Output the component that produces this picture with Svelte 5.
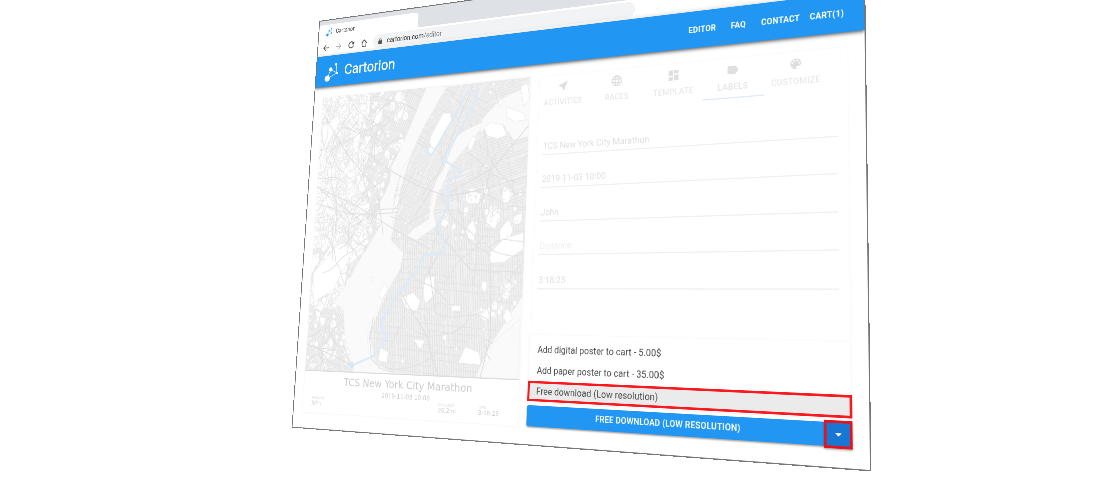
<script>
  const links = ['Editor', 'FAQ', 'Contact', 'Cart(1)'];
  const tabs = [
    { name: 'Activities', d: 'M21 3 3 10.5v1l6.800 2.700L12.500 21h1z' },
    { name: 'Races', d: 'M12 2a10 10 0 1 0 0 20 10 10 0 0 0 0-20zm6.900 6h-2.950a15.600 15.600 0 0 0-1.380-3.560A8 8 0 0 1 18.920 8zM12 4.040c.83 1.200 1.480 2.530 1.910 3.960h-3.820c.43-1.430 1.080-2.760 1.910-3.960zM4.260 14a8.200 8.200 0 0 1 0-4h3.380a16.500 16.500 0 0 0 0 4zm.82 2h2.950c.32 1.250.78 2.450 1.380 3.560A8 8 0 0 1 5.080 16zm2.950-8H5.080a8 8 0 0 1 4.330-3.560A15.600 15.600 0 0 0 8.030 8zM12 19.960A14 14 0 0 1 10.090 16h3.820A14 14 0 0 1 12 19.960zM14.340 14H9.660a14.700 14.700 0 0 1 0-4h4.680a14.700 14.700 0 0 1 0 4zm.25 5.560c.6-1.110 1.060-2.310 1.380-3.560h2.950a8 8 0 0 1-4.330 3.560zM16.360 14a16.500 16.500 0 0 0 0-4h3.380a8.200 8.200 0 0 1 0 4z' },
    { name: 'Template', d: 'M3 13h8V3H3zm0 8h8v-6H3zm10 0h8V11h-8zm0-18v6h8V3z' },
    { name: 'Labels', d: 'M17.630 5.840A2 2 0 0 0 16 5L5 5.010A2 2 0 0 0 3 7v10a2 2 0 0 0 2 1.990L16 19a2 2 0 0 0 1.630-.84L22 12z' },
    { name: 'Customize', d: 'M12 3a9 9 0 0 0 0 18c.83 0 1.500-.67 1.500-1.500 0-.39-.15-.74-.39-1.010a1.500 1.500 0 0 1 1.120-2.490H16a5 5 0 0 0 5-5c0-4.420-4.030-8-9-8zm-5.500 9a1.500 1.500 0 1 1 0-3 1.500 1.500 0 0 1 0 3zm3-4a1.500 1.500 0 1 1 0-3 1.500 1.500 0 0 1 0 3zm5 0a1.500 1.500 0 1 1 0-3 1.500 1.500 0 0 1 0 3zm3 4a1.500 1.500 0 1 1 0-3 1.500 1.500 0 0 1 0 3z' }
  ];
  const fields = [
    { text: 'TCS New York City Marathon' },
    { text: '2019-11-03 10:00' },
    { text: 'John' },
    { text: 'Distance', empty: true },
    { text: '3:18:23' }
  ];
  const options = [
    'Add digital poster to cart - 5.00$',
    'Add paper poster to cart - 35.00$',
    'Free download (Low resolution)'
  ];

  // Deterministic random numbers for the street texture
  let seed = 41;
  function rnd() {
    seed = (seed * 16807) % 2147483647;
    return seed / 2147483647;
  }

  // Parallel broken streets inside a box, turned by an angle
  function streets(x, y, w, h, deg, gap, keep) {
    const t = (deg * Math.PI) / 180;
    const c = Math.cos(t), s = Math.sin(t);
    const R = Math.hypot(w, h) / 2, cx = x + w / 2, cy = y + h / 2;
    let d = '';
    for (let v = -R; v < R; v += gap) {
      for (let u = -R; u < R; ) {
        const len = 12 + rnd() * 60;
        if (rnd() < keep) {
          const x1 = cx + u * c - v * s, y1 = cy + u * s + v * c;
          d += `M${x1.toFixed(1)} ${y1.toFixed(1)}l${(len * c).toFixed(1)} ${(len * s).toFixed(1)}`;
        }
        u += len + 3;
      }
    }
    return d;
  }

  // Irregular blocks: open ground among the streets
  function blobs(n, x, y, w, h, size) {
    let d = '';
    for (let i = 0; i < n; i++) {
      const cx = x + rnd() * w, cy = y + rnd() * h, r = size * (0.25 + rnd() * rnd() * 1.6);
      const k = 5 + Math.floor(rnd() * 3), o = rnd() * 6;
      for (let j = 0; j < k; j++) {
        const a = o + (j * 6.283) / k, q = r * (0.5 + rnd() * 0.7);
        d += (j ? 'L' : 'M') + (cx + q * Math.cos(a)).toFixed(1) + ' ' + (cy + q * Math.sin(a) * 1.3).toFixed(1);
      }
      d += 'z';
    }
    return d;
  }

  // Winding main roads
  function roads(n, x, y, w, h) {
    let d = '';
    for (let i = 0; i < n; i++) {
      let px = x + rnd() * w, py = y + rnd() * h, a = rnd() * 6.283;
      d += `M${px.toFixed(1)} ${py.toFixed(1)}`;
      for (let j = 0; j < 7; j++) {
        a += (rnd() - 0.5) * 0.9;
        px += Math.cos(a) * 18;
        py += Math.sin(a) * 18;
        d += `L${px.toFixed(1)} ${py.toFixed(1)}`;
      }
    }
    return d;
  }

  const west = '22,164 273,164 225,324 208,414 181,440 120,530 80,560 22,600';
  const manhattan = '319,166 436,164 411,238 346,266 320,329 299,353 292,423 259,441 231,479 201,516 212,440 225,360 243,298 273,238';
  const queens = '436,164 500,164 500,430 400,430 345,400 311,436 303,411 308,379 322,354 335,323 400,253';
  const brooklyn = '311,436 345,390 500,400 500,568 438,657 410,714 265,714 196,715 170,640 213,549 234,517 239,486 207,460 229,441 259,441';
  const staten = '24,595 97,588 111,607 110,652 138,714 22,714';
  const areas = [
    { id: 'west', pts: west, deg: [118, 25], box: [22, 164, 260, 440] },
    { id: 'manh', pts: manhattan, deg: [118, 28], box: [200, 164, 240, 350] },
    { id: 'queens', pts: queens, deg: [-14, 76], box: [300, 164, 200, 280] },
    { id: 'brook', pts: brooklyn, deg: [85, 4], box: [165, 380, 340, 340] },
    { id: 'staten', pts: staten, deg: [60, -25], box: [22, 585, 120, 130] }
  ].map((a) => ({
    ...a,
    lines: streets(...a.box, a.deg[0], 5, 0.9) + streets(...a.box, a.deg[1], 13, 0.5)
  }));
  const open =
    blobs(240, 22, 170, 110, 300, 21) + blobs(60, 120, 164, 110, 130, 9) + blobs(110, 90, 290, 120, 240, 6) +
    blobs(60, 22, 480, 80, 110, 11) + blobs(70, 24, 600, 100, 110, 6) + blobs(34, 330, 370, 160, 90, 11) +
    blobs(50, 220, 410, 270, 290, 3) + blobs(26, 410, 530, 85, 130, 8) + blobs(50, 230, 170, 220, 240, 3);
  const mainRoads = roads(40, 22, 164, 200, 400) + roads(18, 300, 270, 190, 160) + roads(14, 230, 430, 250, 260) + roads(8, 24, 600, 80, 90);
  const grounds = [
    '329,219 314,218 288,262 284,294 296,298 316,257 333,233',
    '241,571 267,562 283,577 276,596 250,590',
    '291,534 313,531 312,568 294,583 289,562',
    '430,488 456,464 497,453 498,483 458,507 430,507',
    '353,586 371,586 371,595 353,595',
    '272,649 298,651 288,667',
    '198,666 217,675 215,694 196,691',
    '27,224 60,205 68,218 40,262 26,314',
    '26,523 88,464 121,478 79,556 31,582'
  ];
</script>

<div class="window">
  <div class="strip">
    <div class="tab">
      <svg class="fav" viewBox="0 0 32 34"><g fill="#2196f3" stroke="#2196f3" stroke-width="1"><path fill="none" d="M6 28 14 12 26 22 25 4M6 28 26 22" /><circle cx="6" cy="28" r="5" /><circle cx="14" cy="12" r="3" /><circle cx="26" cy="22" r="2" /><circle cx="25" cy="4" r="2" /></g></svg>
      <span>Cartorion</span>
    </div>
  </div>
  <div class="toolbar">
    <svg viewBox="0 0 24 24"><path d="M21 11H6.800l6-6L11.400 3.600 3 12l8.400 8.400 1.400-1.400-6-6H21z" /></svg>
    <svg viewBox="0 0 24 24" class="off"><path d="M3 11h14.200l-6-6 1.400-1.400L21 12l-8.400 8.400-1.400-1.400 6-6H3z" /></svg>
    <svg viewBox="0 0 24 24"><path d="M18.400 5.600A9 9 0 1 0 20.700 14.500h-2.500A6.600 6.600 0 1 1 16.600 7.300L13 11h8V3z" /></svg>
    <svg viewBox="0 0 24 24"><path fill-rule="evenodd" d="M12 2 2 11.500h3V21h14v-9.500h3zM12 5l5 4.800V19H7V9.800z" /></svg>
    <div class="omni">
      <svg viewBox="0 0 24 24"><path fill-rule="evenodd" d="M18 9h-1V7A5 5 0 0 0 7 7v2H6a2 2 0 0 0-2 2v9a2 2 0 0 0 2 2h12a2 2 0 0 0 2-2v-9a2 2 0 0 0-2-2zM9 7a3 3 0 0 1 6 0v2H9z" /></svg>
      <span>cartorion.com<i>/editor</i></span>
    </div>
  </div>
  <header>
    <svg class="logo" viewBox="0 0 34 38"><g fill="#fff"><path fill="none" stroke="#fff" stroke-width="1.200" d="M7 31 14 14 29 22 26 5M7 31 29 22" /><circle cx="7" cy="31" r="6" /><circle cx="14" cy="14" r="4" /><circle cx="29" cy="22" r="2.300" /><circle cx="26" cy="5" r="2.600" /></g></svg>
    <h1>Cartorion</h1>
    <nav>{#each links as l}<a href="#top">{l}</a>{/each}</nav>
  </header>
  <main>
    <section class="poster">
      <svg class="map" viewBox="22 164 478 550" preserveAspectRatio="none">
        <defs>{#each areas as a}<clipPath id={a.id}><polygon points={a.pts} /></clipPath>{/each}</defs>
        <rect x="22" y="164" width="478" height="550" fill="#fafafa" />
        {#each areas as a}
          <polygon points={a.pts} fill="#f0f0f0" />
          <path d={a.lines} clip-path="url(#{a.id})" stroke="#e6e6e6" stroke-width="2.200" fill="none" />
        {/each}
        <path d={open} fill="#fff" stroke="#ebebeb" stroke-width="1.200" />
        {#each grounds as g}<polygon points={g} fill="#fff" stroke="#eaeaea" />{/each}
        <g stroke="#e2e2e2" stroke-width="1.700" fill="none">
          <path d={mainRoads} />
        </g>
        <g fill="#fafafa" stroke="#efefef" stroke-width="1">
          <path d="M273 164 319 166 273 238 243 298 225 324 212 369 208 414 213 440 207 460 239 486 234 517 213 549 185 600 164 632 171 676 196 700 240 714H139L137 696 114 652 106 594 97 588 81 582 117 536 130 510 153 478 181 433 178 387 198 349 201 316 225 271 256 201z" />
          <path d="M411 238 368 254 346 266 320 329 299 353 298 392 292 423 259 441 245 454 268 462 311 436 303 411 308 379 322 354 335 323 400 253z" />
          <path d="M500 179V276L469 280 447 250 418 248 397 263 400 237 437 202z" />
          <path d="M438 657 497 608V714H412L439 681z" />
        </g>
        <path fill="none" stroke="#e0e0e0" stroke-width="1.800" d="M130 280 200 325 260 355 330 380 400 372 500 350M22 350 120 390 215 440 300 480M30 205 95 290 170 360 190 450M178 400H222M178 408H222M500 255 430 330 340 372M225 420 205 415M307 440 390 520 500 525M318 600 300 520 340 455M24 665 90 685 134 702M178 610 172 650 180 690 200 705 230 712M430 500 438 640 420 714M236 560 300 640 330 714M380 164 350 230 300 360 250 430" />
        <g fill="#fff" stroke="#e8e8e8">
          <path d="M452 216 488 231 495 244 468 245 452 235zM480 180l14-6 6 30-12 14zM434 205l6-6 3 9-6 6zM405 252l16-8 24 6 10 20-20 6-22-8zM372 285l10-18 8 5-13 24zM165 535l9-3-5 10zM186 566l14-22 8 10-12 22zM372 690l14-30 30 10 4 22z" />
        </g>
        <path fill="none" stroke="#dcebfa" stroke-width="4" stroke-linejoin="round" d="M289 276 280 291 292 298 344 220 367 177 386 182 387 198 319 309 361 334 351 343 332 348 335 402 311 436 328 462 331 486 285 491 275 518 236 559 201 609 197 628 210 644 198 666 183 683 134 702" />
        <circle cx="134" cy="702" r="5" fill="#d3e7fb" />
      </svg>
      <div class="caption">
        <h2>TCS New York City Marathon</h2>
        <p>2019-11-03 10:00</p>
        <dl>
          <div><dt>RUNNER</dt><dd>John</dd></div>
          <div><dt>DISTANCE</dt><dd>26.2mi</dd></div>
          <div><dt>TIME</dt><dd>3:18:23</dd></div>
        </dl>
      </div>
    </section>
    <section class="side">
      <div class="panel">
        <div class="tabs">
          {#each tabs as t}
            <div class="item" class:on={t.name === 'Labels'}>
              <svg viewBox="0 0 24 24"><path d={t.d} /></svg>
              <span>{t.name}</span>
            </div>
          {/each}
        </div>
        <div class="fields">
          {#each fields as f}<div class="field" class:empty={f.empty}>{f.text}</div>{/each}
        </div>
      </div>
      <div class="menu">
        {#each options as o, i}<div class="option" class:sel={i === 2}>{o}</div>{/each}
      </div>
      <div class="buttons">
        <div class="main">Free download (Low resolution)</div>
        <div class="drop"><svg viewBox="0 0 24 24"><path d="m7 10 5 5 5-5z" /></svg></div>
      </div>
    </section>
  </main>
</div>

<style>
  :global(body) { background: #fff; overflow: hidden; }
  :global(#app) { height: 500px; overflow: hidden; }
  .window {
    width: 1100px; height: 823px; box-sizing: border-box; background: #fff; overflow: hidden;
    font-family: Roboto, sans-serif; display: flex; flex-direction: column;
    outline: 2px solid #777; transform-origin: 0 0;
    transform: matrix3d(.319, -.058155, 0, -.00020276, -.053451, .46288, 0, -.000068493, 0, 0, 1, 0, 320, 21.7, 0, 1);
  }
  .strip { height: 40px; background: #dee1e6; flex: none; }
  .tab { width: 245px; height: 31px; margin-top: 9px; background: #fff; border-radius: 0 8px 0 0; display: flex; align-items: center; gap: 7px; padding-left: 18px; box-sizing: border-box; font-size: 12px; color: #444; }
  .fav { width: 18px; height: 18px; }
  .toolbar { height: 36px; flex: none; display: flex; align-items: center; padding-left: 11px; gap: 13px; }
  .toolbar > svg { width: 19px; height: 19px; fill: #444; flex: none; }
  .toolbar > svg.off { fill: #aaa; }
  .omni { width: 566px; height: 28px; border-radius: 14px; background: #f1f3f4; display: flex; align-items: center; gap: 9px; padding-left: 10px; box-sizing: border-box; font-size: 14px; color: #333; }
  .omni svg { width: 14px; height: 15px; fill: #555; }
  .omni i { font-style: normal; color: #777; }
  header { height: 65px; flex: none; background: #2196f3; color: #fff; display: flex; align-items: center; padding: 0 32px 0 21px; box-sizing: border-box; box-shadow: 0 2px 4px -1px rgba(0,0,0,.4), 0 4px 5px rgba(0,0,0,.24), 0 1px 10px rgba(0,0,0,.2); position: relative; }
  .logo { width: 37px; height: 42px; margin-top: 4px; }
  h1 { margin: 0 0 0 13px; font-size: 30px; font-weight: 400; -webkit-text-stroke: .4px #fff; }
  nav { margin-left: auto; display: flex; }
  nav a { color: #fff; text-decoration: none; text-transform: uppercase; font-size: 14px; font-weight: 700; letter-spacing: .2px; margin-left: 26px; }
  nav a:last-child { margin-left: 16px; }
  main { display: flex; padding: 23px 26px 0 22px; gap: 20px; }
  .poster { width: 478px; height: 629px; box-shadow: 0 0 4px rgba(0,0,0,.06); flex: none; }
  .map { display: block; width: 478px; height: 550px; border-bottom: 2px solid #dcdcdc; box-sizing: border-box; }
  .caption { font-family: "DejaVu Sans", sans-serif; color: #ccc; text-align: center; }
  h2 { margin: 3px 0 0; font-size: 20.300px; line-height: 30px; font-weight: 400; }
  .caption p { margin: 0; font-size: 12px; line-height: 14px; }
  dl { margin: 0; display: flex; justify-content: space-between; padding: 0 39px 0 21px; font-size: 11px; line-height: 11px; text-align: left; }
  dl div:nth-child(2) { margin-left: 214px; }
  dt { font-size: 7px; line-height: 8px; color: #ddd; }
  dd { margin: 0; }
  .side { flex: 1; display: flex; flex-direction: column; }
  .panel { height: 468px; margin: 2px 1px 0 0; border-radius: 4px; box-shadow: 0 0 4px rgba(0,0,0,.04); box-sizing: border-box; padding: 0 16px 0 9px; color: #e0e0e0; }
  .tabs { display: flex; margin-left: -14px; }
  .item { width: 105.500px; height: 69px; box-sizing: border-box; display: flex; flex-direction: column; align-items: center; padding-top: 8px; border-bottom: 2px solid transparent; text-transform: uppercase; font-size: 14px; font-weight: 500; letter-spacing: .4px; color: #e9e9e9; }
  .item svg { width: 24px; height: 24px; fill: #dfdfdf; margin-bottom: 9px; }
  .item.on { border-color: #d8ecfe; }
  .item.on span { color: #e3e3e3; }
  .fields { padding-top: 16px; }
  .field { height: 60.500px; box-sizing: border-box; border-bottom: 2px solid #f0f0f0; display: flex; align-items: flex-end; padding: 0 0 5px 2px; font-size: 16px; line-height: 19px; letter-spacing: .05px; }
  .empty { color: #efefef; }
  .menu { width: 555px; margin-left: -2px; background: #fff; border-radius: 4px; box-shadow: 0 1px 5px rgba(0,0,0,.07); padding: 8px 0 0; box-sizing: border-box; height: 116px; flex: none; }
  .option { height: 36px; line-height: 36px; padding-left: 16px; font-size: 16px; color: #4a4a4a; box-sizing: border-box; letter-spacing: .08px; }
  .sel { background: #ebebeb; border: 4px solid #f91a20; line-height: 27px; padding-left: 13px; margin: 0 -2px 0 -1px; height: 35px; }
  .buttons { width: 556px; height: 36px; margin: 6px 0 0 -3px; display: flex; background: #2196f3; border-radius: 4px; color: #fff; box-shadow: 0 2px 3px rgba(0,0,0,.4); }
  .main { flex: 1; text-align: center; line-height: 34px; text-transform: uppercase; font-size: 14.300px; font-weight: 600; letter-spacing: .2px; }
  .drop { width: 43px; height: 42px; margin: -3px -2px -3px 0; box-sizing: border-box; background: #1976d2; border: 4px solid #e8121c; display: flex; justify-content: center; align-items: center; box-shadow: 0 2px 3px rgba(0,0,0,.3); }
  .drop svg { width: 24px; height: 24px; fill: #fff; flex: none; }
</style>
